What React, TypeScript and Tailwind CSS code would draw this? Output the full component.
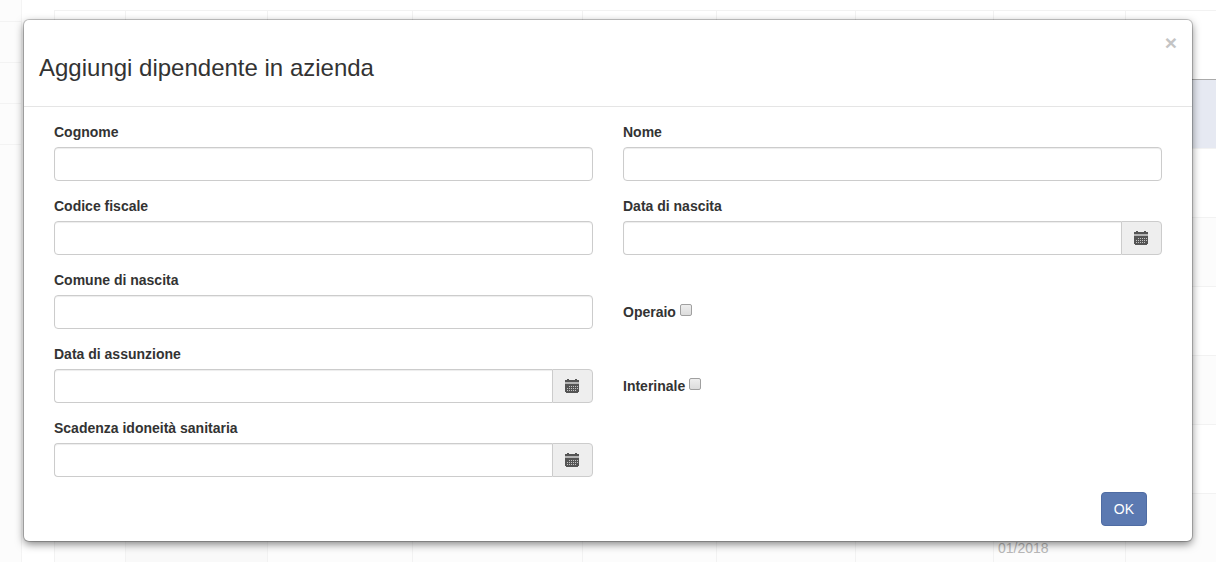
import { useState } from "react";
import type { ReactNode } from "react";

const columns = ["w-[71px]", "w-[142px]", "w-[145px]", "w-[170px]", "w-[134px]", "w-[139px]", "w-[138px]", "w-[132px]", "w-[142px]"];
const rows = ["", "", "", "", "", "", "", "01/2018"];

function CalendarIcon() {
  return (
    <svg width="14" height="14" viewBox="0 0 14 14" shapeRendering="crispEdges" aria-hidden="true">
      <path fill="#555" d="M2 0h2v1h6V0h2v1h2v2H0V1h2z" />
      <path fill="#b5b5b5" d="M0 3h14v2H0z" />
      <path fill="#555" d="M0 5h14v8h-1v1H1v-1H0z" />
      <path
        fill="#c4c4c4"
        d="M4 7h1v1H4zM6 7h1v1H6zM8 7h1v1H8zM10 7h1v1h-1zM12 7h1v1h-1zM2 9h1v1H2zM4 9h1v1H4zM6 9h1v1H6zM8 9h1v1H8zM10 9h1v1h-1zM12 9h1v1h-1zM2 11h1v1H2zM4 11h1v1H4zM6 11h1v1H6zM8 11h1v1H8zM10 11h1v1h-1z"
      />
    </svg>
  );
}

function Field({ id, label, children }: { id: string; label: string; children: ReactNode }) {
  return (
    <div>
      <label htmlFor={id} className="mb-[5px] block font-bold">
        {label}
      </label>
      {children}
    </div>
  );
}

function TextField({ id, label }: { id: string; label: string }) {
  return (
    <Field id={id} label={label}>
      <input
        id={id}
        type="text"
        className="block h-[34px] w-full rounded border border-[#ccc] bg-white px-3 shadow-[inset_0_1px_1px_rgba(0,0,0,0.075)] outline-none focus:border-[#66afe9]"
      />
    </Field>
  );
}

function DateField({ id, label }: { id: string; label: string }) {
  return (
    <Field id={id} label={label}>
      <div className="flex h-[34px]">
        <input
          id={id}
          type="text"
          className="min-w-0 flex-1 rounded-l border border-r-0 border-[#ccc] bg-white px-3 shadow-[inset_0_1px_1px_rgba(0,0,0,0.075)] outline-none focus:border-[#66afe9]"
        />
        <button
          type="button"
          aria-label="Apri calendario"
          className="flex w-[41px] items-center rounded-r border border-[#ccc] bg-[#eee] pl-3"
        >
          <CalendarIcon />
        </button>
      </div>
    </Field>
  );
}

function CheckField({ id, label }: { id: string; label: string }) {
  return (
    <div className="flex h-[34px] items-center gap-1 self-end">
      <label htmlFor={id} className="font-bold">
        {label}
      </label>
      <input
        id={id}
        type="checkbox"
        className="mb-1 size-3 appearance-none rounded-xs border border-[#a0a0a0] bg-linear-to-b from-[#eee] to-[#dcdcdc] checked:bg-[#5b79b1] checked:bg-none"
      />
    </div>
  );
}

// Pagina sotto la finestra modale
function Background() {
  return (
    <div className="flex h-screen overflow-hidden" aria-hidden="true">
      <div className="w-[22px] shrink-0 border-r border-[#f4f4f4] bg-[#fcfcfc] pt-[21px]">
        {[0, 1, 2, 3].map((i) => (
          <div key={i} className="h-[41px] border-t border-[#f3f3f3]" />
        ))}
      </div>
      <div className="min-w-0 flex-1 overflow-hidden pt-[10px] pl-8">
        <table className="w-[1213px] table-fixed border-separate border-spacing-0 border-t border-[#f2f2f2] text-[#b8b8b8]">
          <tbody>
            {rows.map((date, r) => (
              <tr key={r} className={r === 1 ? "bg-[#e6e9f2]" : r % 2 === 1 ? "bg-[#fcfcfc]" : "bg-white"}>
                {columns.map((width, c) => (
                  <td
                    key={c}
                    className={`h-[69px] border-b border-l px-1 pb-1 align-bottom ${width} ${
                      r === 0 ? "border-b-[#aaa] border-l-[#f2f2f2]" : "border-[#f2f2f2]"
                    } ${r === 7 && c === 1 ? "bg-[#f9f9f9]" : ""}`}
                  >
                    {c === 7 ? date : ""}
                  </td>
                ))}
              </tr>
            ))}
          </tbody>
        </table>
      </div>
    </div>
  );
}

export default function App() {
  const [open, setOpen] = useState(true);

  return (
    <div className="relative min-h-screen bg-white font-['Liberation_Sans',Arial,sans-serif] text-sm leading-5 text-[#333]">
      <Background />
      {open && (
        <div className="absolute inset-x-0 top-0 px-6 py-5">
          <div
            role="dialog"
            aria-labelledby="titolo"
            className="rounded-[5px] bg-white shadow-[0_0_0_1px_rgba(0,0,0,0.2),0_3px_9px_rgba(0,0,0,0.5)]"
          >
            <div className="flex items-start justify-between border-b border-[#e5e5e5] p-[15px]">
              <h3 id="titolo" className="mt-5 mb-[10px] text-2xl leading-[26px]">
                Aggiungi dipendente in azienda
              </h3>
              <button
                type="button"
                aria-label="Chiudi"
                onClick={() => setOpen(false)}
                className="-mt-[3px] text-[21px] leading-[21px] font-bold text-[#c4c4c4] hover:text-[#888]"
              >
                ×
              </button>
            </div>
            <form className="p-[15px]" onSubmit={(e) => e.preventDefault()}>
              <div className="grid grid-cols-2 gap-x-[30px] gap-y-[15px] px-[15px]">
                <TextField id="cognome" label="Cognome" />
                <TextField id="nome" label="Nome" />
                <TextField id="codice-fiscale" label="Codice fiscale" />
                <DateField id="data-nascita" label="Data di nascita" />
                <TextField id="comune-nascita" label="Comune di nascita" />
                <CheckField id="operaio" label="Operaio" />
                <DateField id="data-assunzione" label="Data di assunzione" />
                <CheckField id="interinale" label="Interinale" />
                <DateField id="scadenza-idoneita" label="Scadenza idoneità sanitaria" />
              </div>
              <div className="mt-[15px] flex justify-end px-[30px]">
                <button
                  type="submit"
                  className="h-[34px] rounded border border-[#4f6ca3] bg-[#5b79b1] px-3 text-white hover:bg-[#4f6ca3]"
                >
                  OK
                </button>
              </div>
            </form>
          </div>
        </div>
      )}
    </div>
  );
}
